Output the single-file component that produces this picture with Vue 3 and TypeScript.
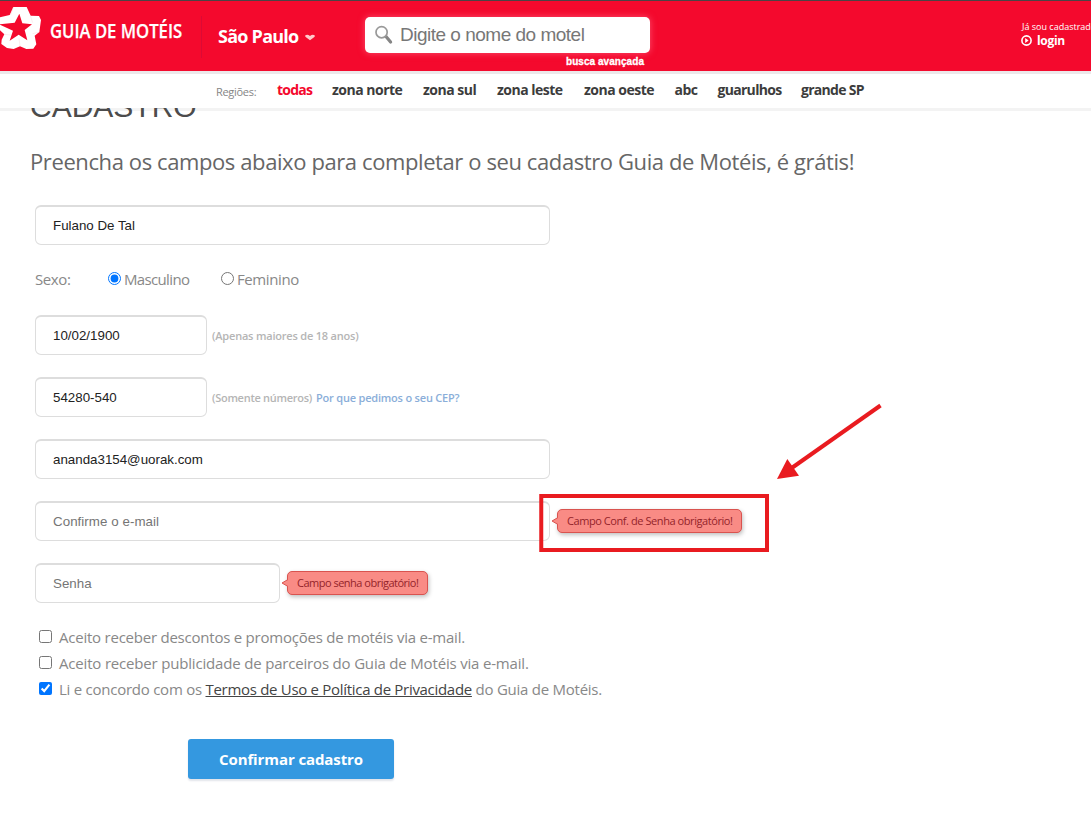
<script setup lang="ts">
import { ref } from 'vue'

interface Region { label: string; width: number; cls: string }

const regions: Region[] = [
  { label: 'todas', width: 35, cls: 'r-todas' },
  { label: 'zona norte', width: 71, cls: 'r-norte' },
  { label: 'zona sul', width: 54, cls: 'r-sul' },
  { label: 'zona leste', width: 67, cls: 'r-leste' },
  { label: 'zona oeste', width: 70.5, cls: 'r-oeste' },
  { label: 'abc', width: 23, cls: 'r-abc' },
  { label: 'guarulhos', width: 63.5, cls: 'r-guarulhos' },
  { label: 'grande SP', width: 66, cls: 'r-grande' },
]

const activeRegion = ref('todas')
const search = ref('')
const name = ref('Fulano De Tal')
const gender = ref('m')
const birth = ref('10/02/1900')
const zip = ref('54280-540')
const email = ref('ananda3154@uorak.com')
const emailConfirm = ref('')
const password = ref('')
const promos = ref(false)
const partners = ref(false)
const terms = ref(true)
</script>

<template>
  <div class="page">
    <header class="topbar">
      <div class="brand">
        <svg class="star" width="42" height="50" viewBox="0 0 126 150">
          <path fill="#fff" d="M40 21H80L92 47L117 48L123 60L118 96L104 107L109 133L100 146L79 147L60 139L41 147L21 144L4 132L5 119L13 103L0 91L-8 70L0 52L29 45Z" />
          <path fill="#f4092d" d="M58 41L67 70L96 73L74 90L82 121L56 104L29 122L39 92L-2 73L44 68Z" />
          <path fill="none" stroke="#fbd0d6" stroke-width="1.2" d="M40 22L32 45M91 47L98 68M118 96L98 101M60 139L57 115M12 103L32 105" />
        </svg>
        <span class="brand-name">GUIA DE MOTÉIS</span>
      </div>
      <div class="city">
        <span class="city-name">São Paulo</span>
        <svg width="10" height="7" viewBox="0 0 10 7"><path fill="#ffc9cb" d="M.3 1.2Q2.5-.2 5 2Q7.5-.2 9.7 1.2V2.7L5 6.3L.3 2.7Z" /></svg>
      </div>
      <div class="search">
        <div class="search-box">
          <svg width="20" height="20" viewBox="0 0 20 20">
            <path stroke="#858585" stroke-width="3.2" stroke-linecap="round" d="M11 11.5L15.6 17" />
            <circle cx="6.6" cy="7.2" r="5.6" fill="#fff" stroke="#999" stroke-width="1.7" />
          </svg>
          <input v-model="search" placeholder="Digite o nome do motel">
        </div>
        <a class="advanced">busca avançada</a>
      </div>
      <div class="account">
        <span class="account-hint">Já sou cadastrado</span>
        <a class="login">
          <svg width="11" height="11" viewBox="0 0 11 11"><circle cx="5.5" cy="5.5" r="4.6" fill="none" stroke="#fff" stroke-width="1.6" /><path fill="#fff" d="M4.2 3L7.6 5.5L4.2 8Z" /></svg>
          <span>login</span>
        </a>
      </div>
    </header>

    <nav class="regions">
      <span class="regions-label">Regiões:</span>
      <a
        v-for="r in regions" :key="r.label" class="region"
        :class="[r.cls, { active: r.label === activeRegion }]"
        :style="{ width: r.width + 'px' }" @click="activeRegion = r.label"
      >{{ r.label }}</a>
    </nav>

    <main>
      <h1>CADASTRO</h1>
      <h2>Preencha os campos abaixo para completar o seu cadastro Guia de Motéis, é grátis!</h2>
      <form @submit.prevent>
        <div class="row"><input v-model="name" class="field wide"></div>
        <div class="gender">
          <span class="gender-label">Sexo:</span>
          <label class="male"><input v-model="gender" type="radio" value="m"><span>Masculino</span></label>
          <label class="female"><input v-model="gender" type="radio" value="f"><span>Feminino</span></label>
        </div>
        <div class="row"><input v-model="birth" class="field short"><span class="hint age">(Apenas maiores de 18 anos)</span></div>
        <div class="row"><input v-model="zip" class="field short"><span class="hint digits">(Somente números)</span><a class="hint why">Por que pedimos o seu CEP?</a></div>
        <div class="row"><input v-model="email" class="field wide"></div>
        <div class="row">
          <input v-model="emailConfirm" class="field wide confirm" placeholder="Confirme o e-mail">
          <span class="error error-confirm"><svg class="tip" width="7" height="10" viewBox="0 0 7 10"><path fill="#f98b85" stroke="#d9534f" d="M7 1.5L1 5L7 8.5" /></svg><span>Campo Conf. de Senha obrigatório!</span></span>
        </div>
        <div class="row">
          <input v-model="password" class="field medium" placeholder="Senha">
          <span class="error error-password"><svg class="tip" width="7" height="10" viewBox="0 0 7 10"><path fill="#f98b85" stroke="#d9534f" d="M7 1.5L1 5L7 8.5" /></svg><span>Campo senha obrigatório!</span></span>
        </div>
        <div class="checks">
          <label class="c-promos"><input v-model="promos" type="checkbox"><span>Aceito receber descontos e promoções de motéis via e-mail.</span></label>
          <label class="c-partners"><input v-model="partners" type="checkbox"><span>Aceito receber publicidade de parceiros do Guia de Motéis via e-mail.</span></label>
          <label class="c-terms"><input v-model="terms" type="checkbox"><span>Li e concordo com os <a>Termos de Uso e Política de Privacidade</a> do Guia de Motéis.</span></label>
        </div>
        <button class="submit" type="submit"><span>Confirmar cadastro</span></button>
      </form>
    </main>

    <svg class="annotation" width="350" height="160" viewBox="535 400 350 160">
      <rect x="541.25" y="496" width="225.75" height="54" fill="none" stroke="#e91b20" stroke-width="4" />
      <path stroke="#e91b20" stroke-width="4" d="M880.5 405.5L791 468.5" />
      <path fill="#e91b20" d="M777 479L787.3 459L799 475.7Z" />
    </svg>
  </div>
</template>

<style>
body { background: #fff; }
</style>

<style scoped>
.page {
  position: relative; width: 1091px; height: 828px; overflow: hidden; background: #fff;
  font-family: "Trebuchet MS", "Open Sans", "Noto Sans", sans-serif; white-space: nowrap;
}
.page * { box-sizing: border-box; }
.topbar { display: flex; height: 74px; background: #f4092d; border-top: 1px solid #4a4345; border-bottom: 3px solid #ece8ea; }
.brand { display: flex; width: 201px; }
.star { flex: none; margin-top: -1px; }
.brand-name { margin: 16px 0 0 8px; font: 600 19px/28px "Open Sans", sans-serif; color: #fff; -webkit-text-stroke: .25px #fff; transform: scaleX(.877); transform-origin: 0 0; }
.city { display: flex; align-items: center; width: 164px; height: 42px; margin-top: 15px; padding: 0 0 0 16px; border-left: 1px solid #dc0a35; color: #fff; }
.city-name { width: 87px; padding-bottom: 2px; font-size: 18px; font-weight: 700; letter-spacing: -.75px; }
.search { display: flex; flex-direction: column; width: 285px; padding-top: 16px; }
.search-box { display: flex; align-items: center; height: 36px; padding-left: 10px; border-radius: 5px; background: #fff; box-shadow: 0 0 7px rgba(255, 110, 140, .7); }
.search-box input { width: 240px; margin-left: 5px; padding: 0; border: 0; outline: 0; background: none; font: 19px/34px "Liberation Sans", Arial, sans-serif; letter-spacing: -.5px; color: #333; }
.search-box input::placeholder { color: #777; }
.advanced { align-self: flex-end; margin: 2px 6px 0 0; font: 700 10px/14px "Liberation Sans", Arial, sans-serif; letter-spacing: .05px; color: #fff; -webkit-text-stroke: .3px #fff; }
.account { display: flex; flex-direction: column; width: 70px; margin: 19px 0 0 auto; color: #fff; }
.account-hint { padding-left: 1px; font-size: 9px; line-height: 13px; }
.login { display: flex; align-items: center; gap: 5px; height: 14px; font-size: 12px; font-weight: 700; letter-spacing: -.3px; }
.regions { position: relative; z-index: 2; display: flex; align-items: center; gap: 20px; height: 34px; padding: 0 0 3px 216px; background: #fff; }
.regions-label { width: 41px; padding-top: 3px; font-size: 11px; letter-spacing: -.3px; color: #858585; }
.region { flex: none; font-size: 14px; font-weight: 700; letter-spacing: -.5px; color: #3c3c3c; }
.r-todas { letter-spacing: -.75px; }
.r-guarulhos, .r-grande { letter-spacing: -.7px; }
.region.active { color: #f4092d; }
main { padding: 0 0 0 30px; border-top: 3px solid #f3f3f3; }
h1 { position: relative; z-index: 1; margin: -22px 0 0; font: 400 30px/36px "Liberation Sans", Arial, sans-serif; color: #4c4c4c; }
h2 { margin: 18px 0 0; font-size: 22px; font-weight: 400; line-height: 36px; letter-spacing: -.4px; color: #666; }
form { padding: 26px 0 0 5px; }
.row { display: flex; align-items: center; height: 40px; margin-bottom: 22px; }
.field { height: 40px; padding: 0 17px; border: 1px solid #ddd; border-top-width: 2px; border-radius: 6px; outline: 0; background: #fff; font: 13.333px/20px "Liberation Sans", Arial, sans-serif; color: #222; }
.field::placeholder { color: #757575; }
.confirm { letter-spacing: .05px; }
.wide { width: 515px; }
.medium { width: 245px; }
.short { width: 172px; }
.gender { display: flex; align-items: center; height: 26px; margin: -1px 0 23px; font-size: 15px; letter-spacing: -.4px; color: #888; }
.gender label { display: flex; align-items: center; }
.gender-label { width: 73px; }
.male { width: 113px; letter-spacing: -.65px; }
.gender input, .checks input { position: relative; top: -1px; flex: none; width: 13px; height: 13px; margin: 0; accent-color: #0075ff; }
.gender input { margin-right: 3px; }
.hint { margin-left: 5px; font-size: 11px; font-weight: 600; letter-spacing: -.2px; color: #b5b5b5; }
.digits { width: 100px; letter-spacing: -.28px; }
.why { margin-left: 4px; color: #8aaed9; }
.error { position: relative; display: flex; align-items: center; height: 24px; margin-left: 7px; padding: 0 9px 2px; border: 1px solid #d9534f; border-radius: 5px; background: #f98b85; box-shadow: 1px 2px 4px rgba(0, 0, 0, .25); font-size: 11px; letter-spacing: -.43px; color: #94242a; }
.error-confirm { width: 185px; }
.error-password { width: 141px; letter-spacing: -.5px; }
.tip { position: absolute; left: -7px; top: 6px; }
.checks { margin-top: -1px; padding: 0 0 1px 4px; }
.checks label { display: flex; align-items: center; gap: 7px; height: 26px; font-size: 15px; letter-spacing: -.23px; color: #888; }
.checks .c-partners { letter-spacing: -.18px; }
.checks .c-terms { letter-spacing: -.25px; }
.checks a { letter-spacing: -.3px; color: #444; text-decoration: underline; }
.submit { display: block; width: 206px; height: 40px; margin: 36px 0 0 153px; padding: 0; border: 0; border-radius: 3px; background: #3498e0; box-shadow: 0 2px 2px #e2e4ea; font: 700 15px "Trebuchet MS", "Open Sans", sans-serif; letter-spacing: -.1px; color: #fff; }
.annotation { position: absolute; left: 535px; top: 400px; z-index: 2; pointer-events: none; }
</style>
